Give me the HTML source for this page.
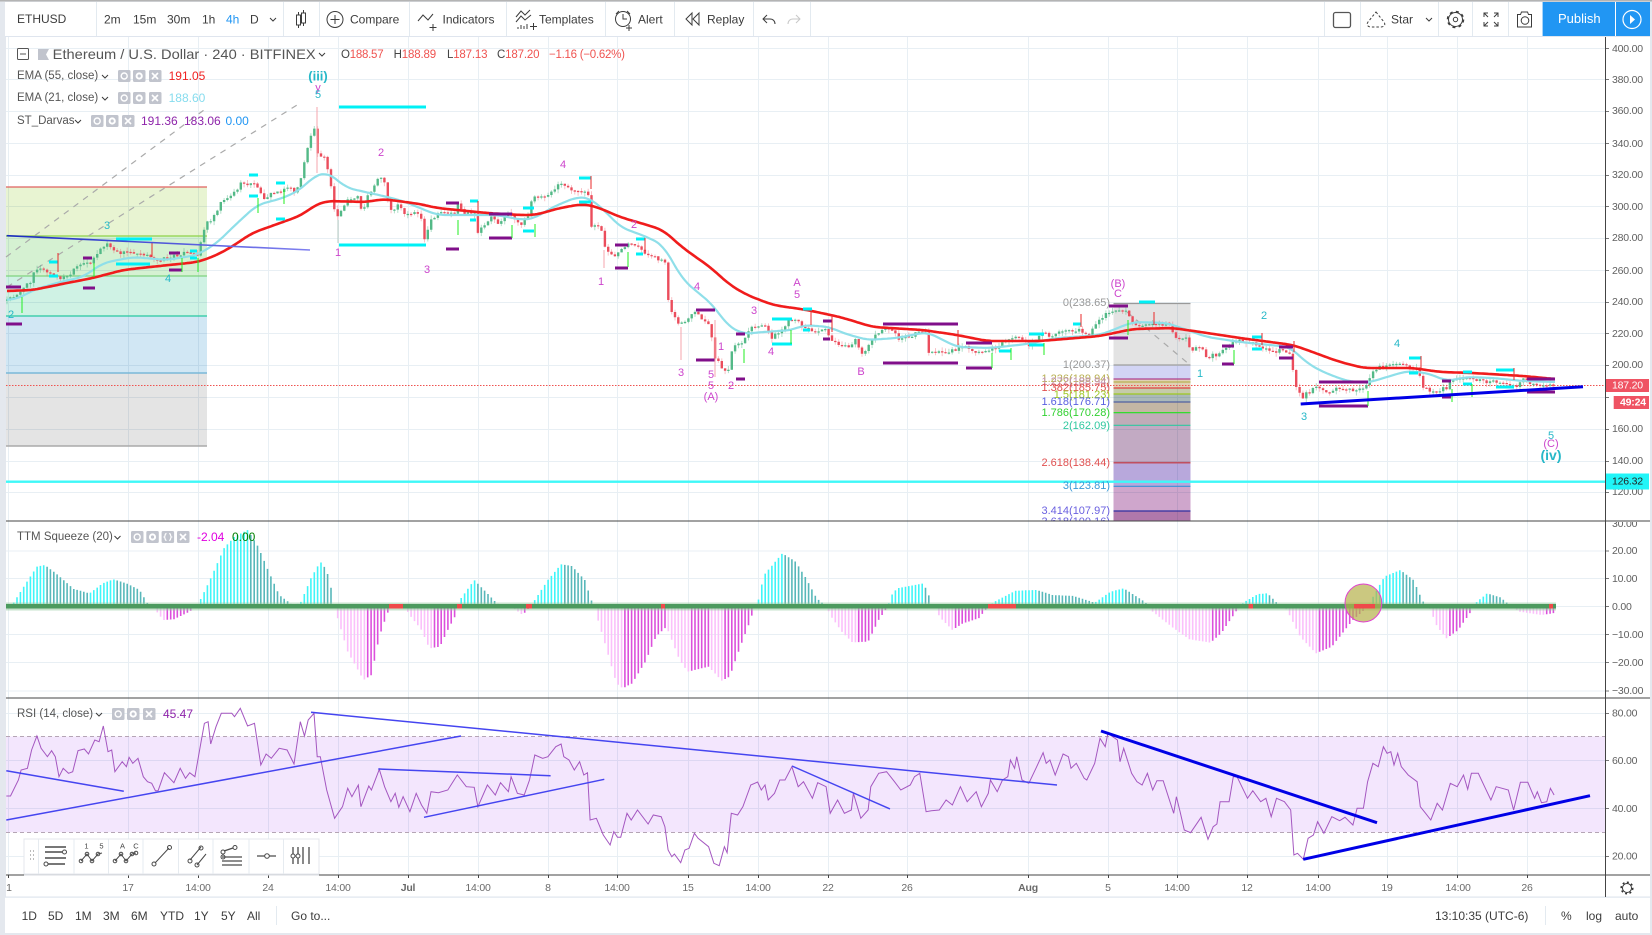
<!DOCTYPE html>
<html lang="en"><head><meta charset="utf-8"><title>ETHUSD chart</title>
<style>
html,body{margin:0;padding:0;width:1652px;height:935px;overflow:hidden;background:#e4e8ee}
svg{position:absolute;left:0;top:0;display:block}
text{font-family:"Liberation Sans",sans-serif;dominant-baseline:central}
.t{font-size:12px;fill:#3c3c3c}
.lg{font-size:11.5px;fill:#555}
.ax{font-size:10.5px;fill:#606060;letter-spacing:-.2px}
.tm{font-size:10.5px;fill:#6a6a6a;text-anchor:middle;letter-spacing:-.2px}
.fb{font-size:11px;text-anchor:end}
.w{font-size:11px;text-anchor:middle}
.p{fill:#cc44cc}.c{fill:#26b8c8}
.i{fill:none;stroke:#3c3c3c;stroke-width:1}
.d{stroke-width:3;fill:none}
</style></head><body>
<svg width="1652" height="935" viewBox="0 0 1652 935" xmlns="http://www.w3.org/2000/svg">
<defs>
<clipPath id="cm"><rect x="6" y="37" width="1599" height="484"/></clipPath>
<clipPath id="cs"><rect x="6" y="522" width="1644" height="176"/></clipPath>
<g id="b3"><rect x="0" y="0" width="12.5" height="12" rx="1.5" fill="#c1c4cd"/><circle cx="6.2" cy="6" r="3" fill="none" stroke="#fff" stroke-width="1.4"/><rect x="15" y="0" width="12.5" height="12" rx="1.5" fill="#c1c4cd"/><circle cx="21.2" cy="6" r="2.6" fill="none" stroke="#fff" stroke-width="2"/><rect x="31" y="0" width="12.5" height="12" rx="1.5" fill="#c1c4cd"/><path d="M34 3l6 6M40 3l-6 6" stroke="#fff" stroke-width="1.6"/></g>
<linearGradient id="gb" x1="0" x2="1" y1="0" y2="0"><stop offset="0" stop-color="#1a2ac0"/><stop offset="1" stop-color="#8080f0"/></linearGradient>
</defs>

<!-- shell -->
<rect x="0" y="0" width="1652" height="1.5" fill="#b4b4b4"/>
<rect x="5" y="2" width="1645" height="34" fill="#fff"/>
<rect x="5" y="36" width="1645" height="1.2" fill="#dfe5ee"/>
<rect x="6" y="37" width="1644" height="860" fill="#fff"/>
<rect x="5" y="897" width="1645" height="36" fill="#fff"/>
<rect x="5" y="896.5" width="1645" height="1.2" fill="#dfe5ee"/>

<!-- toolbar -->
<g stroke="#e3eaf0" stroke-width="1"><path d="M96.5 2V36M283.5 2V36M319.5 2V36M409.5 2V36M506.5 2V36M605.5 2V36M674.5 2V36M753.5 2V36M810.5 2V36M1324.5 2V36M1360.5 2V36M1438.5 2V36M1472.5 2V36M1508.5 2V36"/></g>
<text class="t" x="17" y="19">ETHUSD</text>
<text class="t" x="104" y="19.5">2m</text><text class="t" x="133" y="19.5">15m</text><text class="t" x="167" y="19.5">30m</text><text class="t" x="202" y="19.5">1h</text><text class="t" x="226" y="19.5" style="fill:#2196f3">4h</text><text class="t" x="250" y="19.5">D</text>
<path class="i" d="M270 18l3 3 3-3"/>
<path class="i" d="M298.5 12v3M298.5 25v3M303.5 10v3M303.5 23v3"/><rect class="i" x="296.5" y="15" width="4" height="10"/><rect class="i" x="301.5" y="13" width="4" height="10"/>
<circle class="i" cx="335" cy="19.5" r="8"/><path class="i" d="M335 15v9M330.5 19.5h9"/>
<text class="t" x="350" y="19.5">Compare</text>
<path class="i" d="M418 21l5-6 5 5 5-6M433 24v7M429.5 27.5h7"/>
<text class="t" x="442.5" y="19.5">Indicators</text>
<path class="i" d="M516 17l5-6 4 4 5-5M516 22l5-6 4 4 6-5M518 29v-2M521 29v-4M524 29v-3M527 29v-5M530 26.5h7M533.5 23v7"/>
<text class="t" x="539" y="19.5">Templates</text>
<circle class="i" cx="623" cy="19" r="7.5"/><path class="i" d="M623 14v5h4M616 14l3-3M630 14l-3-3M626 28h6M629 25v6"/>
<text class="t" x="638" y="19.5">Alert</text>
<path class="i" d="M692 13l-6 6 6 6zM699 13l-6 6 6 6z"/>
<text class="t" x="707" y="19.5">Replay</text>
<path class="i" d="M767 15l-4 4 4 4M763 19h7c3 0 5 2 5 5"/>
<path class="i" style="stroke:#c8c8c8" d="M796 15l4 4-4 4M800 19h-7c-3 0-5 2-5 5"/>
<rect x="1333.5" y="12.5" width="17" height="15" rx="2" fill="none" stroke="#555" stroke-width="1.3"/>
<path class="i" d="M1376 12l8 10c2 3 0 5-3 5h-10c-3 0-5-2-3-5z" stroke-dasharray="2.5 2"/>
<text class="t" x="1391" y="19.5">Star</text>
<path class="i" d="M1426 18l3 3 3-3"/>
<circle class="i" cx="1455.5" cy="19.5" r="2.2"/><circle class="i" cx="1455.5" cy="19.5" r="7"/><circle cx="1455.5" cy="19.5" r="8" fill="none" stroke="#3c3c3c" stroke-width="1.5" stroke-dasharray="3 3.3"/>
<path class="i" d="M1484 17v-4h4M1484 13l4 4M1498 17v-4h-4M1498 13l-4 4M1484 22v4h4M1484 26l4-4M1498 22v4h-4M1498 26l-4-4"/>
<path class="i" d="M1517.500 14.500h3l1-2.500h6l1 2.500h3v12.500h-14z"/><circle class="i" cx="1525" cy="20.500" r="3.800"/>
<rect x="1542.600" y="2" width="72.400" height="34" fill="#2196f3"/>
<rect x="1616" y="2" width="34" height="34" fill="#2196f3"/>
<text x="1558" y="18.500" style="font-size:13px;fill:#fff">Publish</text>
<circle cx="1632" cy="19.500" r="9" fill="none" stroke="#fff" stroke-width="1.200"/><path d="M1630 15l5 4.500-5 4.500z" fill="#fff"/>

<!-- fib left + mid -->
<g style="mix-blend-mode:multiply">
<rect x="6" y="187" width="201" height="49" fill="#e8f4d2"/>
<rect x="6" y="236" width="201" height="40" fill="#d5f1d2"/>
<rect x="6" y="276" width="201" height="40" fill="#cff2e4"/>
<rect x="6" y="316" width="201" height="57" fill="#d1e7f4"/>
<rect x="6" y="373" width="201" height="73" fill="#e4e4e4"/>
<rect x="1113.500" y="303" width="77" height="62" fill="#e3e3e3"/>
<rect x="1113.500" y="365" width="77" height="14" fill="#d2d4f4"/>
<rect x="1113.500" y="379" width="77" height="9" fill="#e0d0b4"/>
<rect x="1113.500" y="388" width="77" height="6" fill="#c6cbaa"/>
<rect x="1113.500" y="394" width="77" height="8" fill="#abb9b9"/>
<rect x="1113.500" y="402" width="77" height="11" fill="#c3b6a4"/>
<rect x="1113.500" y="413" width="77" height="12" fill="#c0acb8"/>
<rect x="1113.500" y="425" width="77" height="38" fill="#c2aac3"/>
<rect x="1113.500" y="463" width="77" height="23" fill="#b8a8dc"/>
<rect x="1113.500" y="486" width="77" height="25" fill="#cfa6cc"/>
<rect x="1113.500" y="511" width="77" height="10" fill="#b078ab"/>
</g>
<rect x="6" y="736.500" width="1599" height="95.800" fill="#f3e6fd"/>

<!-- grid -->
<g stroke="#e8eff4" stroke-width="1" style="mix-blend-mode:multiply">
<path d="M8.500 37V875M128.500 37V875M198.500 37V875M268.500 37V875M338.500 37V875M408.500 37V875M478.500 37V875M548.500 37V875M617.500 37V875M688.500 37V875M758.500 37V875M828.500 37V875M907.500 37V875M1028.500 37V875M1108.500 37V875M1177.500 37V875M1247.500 37V875M1318.500 37V875M1387.500 37V875M1457.500 37V875M1527.500 37V875"/>
<path d="M6 48.500H1605M6 79.500H1605M6 111.500H1605M6 143.500H1605M6 175.500H1605M6 206.500H1605M6 238.500H1605M6 270.500H1605M6 302.500H1605M6 333.500H1605M6 365.500H1605M6 397.500H1605M6 429.500H1605M6 461.500H1605M6 492.500H1605"/>
<path d="M6 551H1605M6 578.500H1605M6 606.500H1605M6 634.500H1605M6 662.500H1605M6 691H1605"/>
<path d="M6 713.500H1605M6 760.500H1605M6 808.500H1605M6 856.500H1605"/>
</g>

<!-- fib lines -->
<g stroke-width="1.200" fill="none">
<path stroke="#e06060" d="M6 187H207"/><path stroke="#8fd24a" d="M6 236H207"/><path stroke="#7fd27f" d="M6 276H207"/><path stroke="#26c9a0" d="M6 316H207"/><path stroke="#7ab8d8" stroke-width="1.600" d="M6 373H207"/><path stroke="#aaa" stroke-width="1.600" d="M6 446H207"/>
<path stroke="#999" d="M1113.500 303.500H1190.500"/><path stroke="#aaa" stroke-width="1.600" d="M1113.500 365H1190.500"/><path stroke="#b04090" d="M1113.500 379H1190.500"/><path stroke="#b8b050" d="M1113.500 382H1190.500"/><path stroke="#e04040" d="M1113.500 388H1190.500"/><path stroke="#9cc820" d="M1113.500 394H1190.500"/><path stroke="#5060a0" d="M1113.500 402H1190.500"/><path stroke="#20e020" d="M1113.500 412.700H1190.500"/><path stroke="#30c8a0" d="M1113.500 425.300H1190.500"/><path stroke="#c05060" stroke-width="1.600" d="M1113.500 462.700H1190.500"/><path stroke="#3a90d8" d="M1113.500 486.300H1190.500"/><path stroke="#3030a0" d="M1113.500 511H1190.500"/>
<path stroke="#aaa" stroke-dasharray="6 6" d="M6 257L208 107M7 287L297 105M1127 312L1190 365"/>
</g>
<rect x="6" y="480.500" width="1599" height="2.400" fill="#40f8f8"/>
<path stroke="#ef5350" stroke-width="1" stroke-dasharray="1.500 1.500" d="M6 385.500H1605" fill="none"/>
<g clip-path="url(#cm)">
<text class="fb" x="1110" y="303" fill="#999">0(238.65)</text>
<text class="fb" x="1110" y="365" fill="#999">1(200.37)</text>
<text class="fb" x="1110" y="379" fill="#b8b050">1.236(189.94)</text>
<text class="fb" x="1110" y="382" fill="#c090b0">1.272(188.94)</text>
<text class="fb" x="1110" y="388" fill="#e05050">1.382(185.75)</text>
<text class="fb" x="1110" y="395" fill="#9cc820">1.5(181.23)</text>
<text class="fb" x="1110" y="402" fill="#5a60e0">1.618(176.71)</text>
<text class="fb" x="1110" y="413" fill="#30d030">1.786(170.28)</text>
<text class="fb" x="1110" y="426" fill="#30c8a0">2(162.09)</text>
<text class="fb" x="1110" y="463" fill="#e05050">2.618(138.44)</text>
<text class="fb" x="1110" y="486" fill="#3a9ad8">3(123.81)</text>
<text class="fb" x="1110" y="511" fill="#6a60e0">3.414(107.97)</text>
<text class="fb" x="1110" y="522" fill="#6a60e0">3.618(100.16)</text>
</g>

<!-- candles (filled by script) -->
<g clip-path="url(#cm)">
<path id="gw" stroke="#53b987" stroke-opacity=".45" fill="none" stroke-width="1"/>
<path id="rw" stroke="#eb4d5c" stroke-opacity=".35" fill="none" stroke-width="1"/>
<path id="gb2" fill="#53b987"/>
<path id="rb" fill="#eb4d5c"/>
<path id="e21" fill="none" stroke="#8fdfe9" stroke-width="2.200" stroke-linejoin="round"/>
<path id="e55" fill="none" stroke="#f01c1c" stroke-width="2.600" stroke-linejoin="round"/>
<!-- darvas -->
<path class="d" stroke="#00f0f5" d="M116 239H152M116 264H150M49 262H58M49 276H58M190 251H197M190 258H197M249 175H258M249 196H258M276 183H285M276 219H285M339 107H426M339 245H426M470 201H478M470 220H476M523 208H534M523 231H534M579 178H591M579 202H591M636 239H645M636 254H643M772 319H792M772 344H792M803 309H812M803 330H810M999 351H1011M1029 334H1044M1029 345H1044M1073 324H1081M1139 302H1155M1252 337H1262M1252 349H1262M1409 358H1421M1409 373H1418M1463 372H1472M1463 384H1472M1496 370H1514M1496 387H1514"/>
<path class="d" stroke="#800f8a" d="M6 287H21M6 324H22M83 288H95M83 258H92M169 253H180M169 270H182M446 203H459M446 249H459M489 214H512M489 238H512M615 245H628M615 268H628M696 310H715M696 360H715M736 334H745M736 379H745M823 321H832M823 339H830M883 324H958M883 363H958M966 343H992M966 368H992M1109 306H1128M1109 338H1128M1222 346H1234M1222 364H1234M1279 347H1293M1279 358H1293M1319 382H1368M1319 406H1368M1442 381H1451M1442 397H1451M1527 379H1555M1527 392H1555"/>
<path fill="none" stroke="#22ee22" stroke-width="1" d="M22 297V313M94 263V277M182 258V272M198 258V272M258 198V213M284 190V204M458 220V235M512 225V238M535 224V237M628 252V267M744 349V363M791 330V344M992 353V368M1011 348V360M1044 343V355M1128 320V335M1234 350V364M1368 391V406M1452 389V402M1472 384V397"/>
<path fill="none" stroke="#ea2a2a" stroke-width="1" d="M58 253V272M152 242V257M478 201V213M591 176V189M645 238V251M811 311V325M832 315V332M958 330V345M1081 314V327M1154 312V325M1262 333V345M1294 341V352M1421 356V370M1514 368V380"/>
<path fill="none" stroke="#f4a6ae" stroke-width="1" d="M317 107V173M681 327V360M715 320V377M604 250V268"/>
<path fill="none" stroke="#b5c8c0" stroke-width="1" d="M338 220V243"/>
<!-- trend lines -->
<path stroke="url(#gb)" stroke-width="1.600" fill="none" d="M6.700 235.700L310 250"/>
<path stroke="#0000e6" stroke-width="3" fill="none" d="M1300.700 404L1583 386.700"/>
</g>

<!-- wave labels -->
<text class="w c" x="318" y="76" style="font-size:13px;font-weight:bold">(iii)</text>
<text class="w p" x="318" y="88">y</text><text class="w c" x="318" y="95">5</text>
<text class="w p" x="381" y="153">2</text><text class="w c" x="107" y="226">3</text><text class="w c" x="168" y="279">4</text><text class="w c" x="11" y="315">2</text>
<text class="w p" x="338" y="253">1</text><text class="w p" x="427" y="270">3</text><text class="w p" x="563" y="165">4</text><text class="w p" x="601" y="282">1</text><text class="w p" x="634" y="225">2</text><text class="w p" x="697" y="287">4</text><text class="w p" x="721" y="347">1</text><text class="w p" x="681" y="373">3</text><text class="w p" x="711" y="375">5</text><text class="w p" x="711" y="386">5</text><text class="w p" x="711" y="397">(A)</text><text class="w p" x="731" y="386">2</text><text class="w p" x="754" y="311">3</text><text class="w p" x="771" y="352">4</text><text class="w p" x="797" y="283">A</text><text class="w p" x="797" y="295">5</text><text class="w p" x="861" y="372">B</text><text class="w p" x="1118" y="284">(B)</text><text class="w p" x="1118" y="294">C</text>
<text class="w c" x="1200" y="374">1</text><text class="w c" x="1264" y="316">2</text><text class="w c" x="1304" y="417">3</text><text class="w c" x="1397" y="344">4</text><text class="w c" x="1551" y="436">5</text><text class="w p" x="1551" y="444">(C)</text><text class="w c" x="1551" y="455" style="font-size:14px;font-weight:bold">(iv)</text>

<!-- legends -->
<rect x="17.500" y="48.500" width="11" height="11" rx="1" fill="none" stroke="#555"/><path d="M20 54h6" stroke="#555"/>
<path d="M38 49h11l-3 5.500 3 5.500h-11z" fill="#c1c4cd"/>
<text x="52.700" y="54" textLength="263" lengthAdjust="spacingAndGlyphs" style="font-size:14px;fill:#555">Ethereum / U.S. Dollar · 240 · BITFINEX</text>
<path class="i" d="M319 53l3 3 3-3"/>
<g style="font-size:11.500px" fill="#ef5350">
<text x="341" y="55" textLength="42.600"><tspan fill="#444">O</tspan>188.57</text>
<text x="393.600" y="55" textLength="42.600"><tspan fill="#444">H</tspan>188.89</text>
<text x="447" y="55" textLength="40.500"><tspan fill="#444">L</tspan>187.13</text>
<text x="497" y="55" textLength="42.500"><tspan fill="#444">C</tspan>187.20</text>
<text x="549" y="55" textLength="76">−1.16 (−0.62%)</text>
</g>
<text class="lg" x="17" y="76">EMA (55, close)</text><path class="i" d="M102 75l3 3 3-3"/><use href="#b3" x="118" y="70"/><text x="168.600" y="76" style="font-size:12px" fill="#f02020">191.05</text>
<text class="lg" x="17" y="98">EMA (21, close)</text><path class="i" d="M102 97l3 3 3-3"/><use href="#b3" x="118" y="92"/><text x="168.600" y="98" style="font-size:12px" fill="#86dcee">188.60</text>
<text class="lg" x="17" y="121">ST_Darvas</text><path class="i" d="M75 120l3 3 3-3"/><use href="#b3" x="91" y="115"/><text x="141" y="121" style="font-size:12px" fill="#8e24aa">191.36</text><text x="184" y="121" style="font-size:12px" fill="#8e24aa">183.06</text><text x="225.500" y="121" style="font-size:12px" fill="#2196f3">0.00</text>

<!-- squeeze -->
<g clip-path="url(#cs)">
<path id="hc" stroke="#40f5f8" stroke-width="1.600" fill="none"/>
<path id="ht" stroke="#58b8ba" stroke-width="1.600" fill="none"/>
<path id="hp" stroke="#fbc0fb" stroke-width="1.600" fill="none"/>
<path id="hm" stroke="#dc50dc" stroke-width="1.600" fill="none"/>
<rect x="6" y="602.500" width="1550" height="8" fill="#8fc79a" opacity=".5"/>
<rect x="6" y="604" width="1550" height="4.500" fill="#4c9a5e"/>
<ellipse cx="1363.400" cy="603" rx="18.400" ry="19" fill="#b5b04a" fill-opacity=".7" stroke="#e040d0" stroke-width="1"/>
<path fill="#ef4a4a" d="M389 604h14v4.500h-14zM457 604h5v4.500h-5zM526 604h6v4.500h-6zM661 604h4v4.500h-4zM988 604h28v4.500h-28zM1248.500 604h4.500v4.500h-4.500zM1354 604h21v4.500h-21zM1549 604h4v4.500h-4z"/>
</g>
<text class="lg" x="17" y="537">TTM Squeeze (20)</text><path class="i" d="M114.500 536l3 3 3-3"/>
<rect x="131" y="531" width="12.500" height="12" rx="1.500" fill="#c1c4cd"/><circle cx="137.200" cy="537" r="3" fill="none" stroke="#fff" stroke-width="1.400"/>
<rect x="146.300" y="531" width="12.500" height="12" rx="1.500" fill="#c1c4cd"/><circle cx="152.500" cy="537" r="2.600" fill="none" stroke="#fff" stroke-width="2"/>
<rect x="161.600" y="531" width="12.500" height="12" rx="1.500" fill="#c1c4cd"/><path d="M166.500 533.500c-2 0-1 3-2.200 3.500 1.200.5.200 3.500 2.200 3.500M169.200 533.500c2 0 1 3 2.200 3.500-1.200.5-.2 3.500-2.200 3.500" fill="none" stroke="#fff" stroke-width="1.200"/>
<rect x="177" y="531" width="12.500" height="12" rx="1.500" fill="#c1c4cd"/><path d="M180 534l6 6M186 534l-6 6" stroke="#fff" stroke-width="1.600"/>
<text x="197" y="537" style="font-size:12px" fill="#e000e0">-2.04</text><text x="232" y="537" style="font-size:12px" fill="#008000">0.00</text>

<!-- rsi -->
<path d="M6 736.500H1605M6 832.500H1605" stroke="#b5a5b5" stroke-width="1" stroke-dasharray="4 3" fill="none"/>
<path id="rsi" fill="none" stroke="#a457c0" stroke-width="1"/>
<g fill="none" stroke="#4545f0" stroke-width="1.500">
<path d="M6.300 770.700L123.800 791.300"/><path d="M6.300 820L461 736"/><path d="M311 712.300L1057 785"/><path d="M378.300 769L550.600 775.700"/><path d="M424 817.300L604.300 779.300"/><path d="M792 766L890 809"/>
</g>
<g fill="none" stroke="#0000e6" stroke-width="3">
<path d="M1101 731L1377 822.700"/><path d="M1303.300 859.300L1590 795.700"/>
</g>
<text class="lg" x="17" y="714">RSI (14, close)</text><path class="i" d="M96 713l3 3 3-3"/><use href="#b3" x="112" y="708"/><text x="163" y="714" style="font-size:12px" fill="#8e24aa">45.47</text>

<!-- axis labels -->
<g class="axg">
<text class="ax" x="1612" y="49">400.00</text><text class="ax" x="1612" y="80">380.00</text><text class="ax" x="1612" y="111">360.00</text><text class="ax" x="1612" y="144">340.00</text><text class="ax" x="1612" y="175">320.00</text><text class="ax" x="1612" y="207">300.00</text><text class="ax" x="1612" y="238">280.00</text><text class="ax" x="1612" y="271">260.00</text><text class="ax" x="1612" y="302">240.00</text><text class="ax" x="1612" y="334">220.00</text><text class="ax" x="1612" y="365">200.00</text><text class="ax" x="1612" y="429">160.00</text><text class="ax" x="1612" y="461">140.00</text><text class="ax" x="1612" y="492">120.00</text>
<g clip-path="url(#cs)"><text class="ax" x="1612" y="524">30.00</text></g>
<text class="ax" x="1612" y="551">20.00</text><text class="ax" x="1612" y="579">10.00</text><text class="ax" x="1612" y="607">0.00</text><text class="ax" x="1612" y="635">−10.00</text><text class="ax" x="1612" y="663">−20.00</text><text class="ax" x="1612" y="691">−30.00</text>
<text class="ax" x="1612" y="713.500">80.00</text><text class="ax" x="1612" y="761">60.00</text><text class="ax" x="1612" y="809">40.00</text><text class="ax" x="1612" y="856.500">20.00</text>
</g>
<path stroke="#777" d="M1605 48.500h4M1605 79.500h4M1605 111.500h4M1605 143.500h4M1605 175.500h4M1605 206.500h4M1605 238.500h4M1605 270.500h4M1605 302.500h4M1605 333.500h4M1605 365.500h4M1605 397.500h4M1605 429.500h4M1605 461.500h4M1605 492.500h4M1605 551h4M1605 578.500h4M1605 606.500h4M1605 634.500h4M1605 662.500h4M1605 691h4M1605 713.500h4M1605 760.500h4M1605 808.500h4M1605 856.500h4" fill="none"/>
<rect x="1605" y="379" width="44" height="13" fill="#ef5363"/><text x="1612" y="385.500" style="font-size:10.500px;fill:#fff;letter-spacing:-.2px">187.20</text>
<rect x="1613.700" y="396" width="35.300" height="13" fill="#ef5363"/><text x="1620" y="402.500" style="font-size:10.500px;fill:#fff;font-weight:bold;letter-spacing:-.2px">49:24</text>
<rect x="1605" y="473.500" width="44" height="16" fill="#20f5f8"/><text x="1612" y="481.500" style="font-size:10.500px;fill:#222;letter-spacing:-.2px">126.32</text>

<!-- separators -->
<path d="M6 521H1650M6 698H1650M6 875H1650" stroke="#444" stroke-width="1" fill="none"/>
<path d="M1605.500 37V897" stroke="#444" stroke-width="1" fill="none"/>

<!-- time axis -->
<text class="tm" x="9" y="888">1</text><text class="tm" x="128" y="888">17</text><text class="tm" x="198" y="888">14:00</text><text class="tm" x="268" y="888">24</text><text class="tm" x="338" y="888">14:00</text><text class="tm" x="408" y="888" style="font-weight:bold">Jul</text><text class="tm" x="478" y="888">14:00</text><text class="tm" x="548" y="888">8</text><text class="tm" x="617" y="888">14:00</text><text class="tm" x="688" y="888">15</text><text class="tm" x="758" y="888">14:00</text><text class="tm" x="828" y="888">22</text><text class="tm" x="907" y="888">26</text><text class="tm" x="1028" y="888" style="font-weight:bold">Aug</text><text class="tm" x="1108" y="888">5</text><text class="tm" x="1177" y="888">14:00</text><text class="tm" x="1247" y="888">12</text><text class="tm" x="1318" y="888">14:00</text><text class="tm" x="1387" y="888">19</text><text class="tm" x="1458" y="888">14:00</text><text class="tm" x="1527" y="888">26</text>
<path stroke="#444" d="M8.500 875v3M128.500 875v3M198.500 875v3M268.500 875v3M338.500 875v3M408.500 875v3M478.500 875v3M548.500 875v3M617.500 875v3M688.500 875v3M758.500 875v3M828.500 875v3M907.500 875v3M1028.500 875v3M1108.500 875v3M1177.500 875v3M1247.500 875v3M1318.500 875v3M1387.500 875v3M1457.500 875v3M1527.500 875v3" fill="none"/>
<circle cx="1627" cy="888" r="4.500" fill="none" stroke="#333"/><circle cx="1627" cy="888" r="5.800" fill="none" stroke="#333" stroke-width="1.500" stroke-dasharray="2 2.500"/>

<!-- drawing toolbar -->
<rect x="24" y="839" width="295" height="35" fill="#fff" stroke="#e4e7ec"/>
<rect x="24" y="874" width="295" height="1.500" fill="#d8dbe0"/>
<path stroke="#e6ebf0" d="M38.500 839v35M74 839v35M108.500 839v35M143 839v35M178.500 839v35M213 839v35M249 839v35M283.500 839v35" fill="none"/>
<path d="M30 851h1M33 851h1M30 855h1M33 855h1M30 859h1M33 859h1" stroke="#bbb" stroke-width="2" fill="none"/>
<g fill="none" stroke="#4a4a4a" stroke-width="1">
<path stroke-width="1.500" d="M45 847h21M45 852h17M45 858h21M48 864h17"/><circle cx="64.500" cy="852" r="2"/><circle cx="46" cy="864" r="2"/>
<path d="M81 861l6-7 5 7 6-7 4-1"/><circle cx="81" cy="861" r="1.800"/><circle cx="87" cy="854" r="1.800"/><circle cx="92" cy="861" r="1.800"/><circle cx="98" cy="854" r="1.800"/>
<path d="M115 861l6-7 5 7 6-7 4-1"/><circle cx="115" cy="861" r="1.800"/><circle cx="121" cy="854" r="1.800"/><circle cx="126" cy="861" r="1.800"/><circle cx="132" cy="854" r="1.800"/><circle cx="136" cy="853" r="1.800"/>
<path d="M155 863l14-15"/><circle cx="154" cy="864" r="2"/><circle cx="169.500" cy="847.500" r="2"/>
<path d="M190 860l11-13M197 865l9-11"/><circle cx="190" cy="861" r="2"/><circle cx="201" cy="848" r="2"/><circle cx="197" cy="865" r="2"/>
<path d="M224 851l9-3M222 857h20M222 861h20M222 865h20" stroke-width="1.300"/><circle cx="223" cy="852" r="2"/><circle cx="235" cy="847.500" r="2"/><circle cx="223" cy="857" r="2"/>
<path stroke-width="1.300" d="M257 856h19"/><circle cx="267" cy="856" r="2.300" fill="#fff"/>
<path stroke-width="1.300" d="M293 847v17M298 847v17M303 847v17M309 847v17"/><circle cx="293" cy="856" r="2" fill="#fff"/><circle cx="298" cy="856" r="2" fill="#fff"/>
</g>
<text x="86.500" y="846" style="font-size:7.500px;fill:#444;text-anchor:middle">1</text><text x="101.500" y="846" style="font-size:7.500px;fill:#444;text-anchor:middle">5</text>
<text x="122.500" y="846" style="font-size:7.500px;fill:#444;text-anchor:middle">A</text><text x="136" y="846" style="font-size:7.500px;fill:#444;text-anchor:middle">C</text>

<!-- bottom bar -->
<text class="t" x="21.600" y="916">1D</text><text class="t" x="48" y="916">5D</text><text class="t" x="75" y="916">1M</text><text class="t" x="103" y="916">3M</text><text class="t" x="131" y="916">6M</text><text class="t" x="160" y="916">YTD</text><text class="t" x="194" y="916">1Y</text><text class="t" x="221" y="916">5Y</text><text class="t" x="247" y="916">All</text>
<path stroke="#e3eaf0" d="M276.500 906v19M1545.500 906v19" fill="none"/>
<text class="t" x="291" y="916">Go to...</text>
<text class="t" x="1435" y="916">13:10:35 (UTC-6)</text>
<text class="t" x="1561" y="916">%</text><text class="t" x="1586" y="916">log</text><text class="t" x="1615" y="916">auto</text>
</svg>
<script>
(function(){
var C=[[7,300],[15,295],[22,290],[30,282],[35,268],[43,270],[58,278],[68,277],[77,267],[90,262],[100,250],[108,243],[115,253],[133,252],[143,253],[153,260],[170,258],[182,253],[197,255],[202,238],[205,225],[213,217],[222,200],[232,195],[242,183],[257,185],[262,198],[277,192],[287,187],[295,192],[302,177],[305,158],[310,137],[315,128],[318,155],[325,155],[328,173],[333,193],[335,220],[340,213],[347,200],[358,197],[362,215],[367,197],[377,180],[383,177],[387,197],[392,213],[398,203],[403,213],[410,213],[420,213],[425,240],[430,222],[440,213],[455,213],[458,203],[463,213],[475,215],[478,233],[487,223],[490,215],[500,225],[502,217],[510,213],[520,225],[528,217],[533,195],[543,197],[557,187],[563,183],[573,193],[583,190],[590,197],[591,227],[600,225],[605,248],[615,257],[628,245],[640,248],[650,257],[663,260],[667,263],[668,297],[672,312],[677,323],[683,323],[695,313],[710,327],[715,358],[722,368],[730,372],[732,347],[743,343],[752,327],[767,327],[770,338],[780,332],[790,320],[797,322],[810,330],[818,333],[825,327],[832,340],[848,348],[857,338],[860,358],[870,342],[880,330],[892,330],[900,340],[920,332],[927,332],[928,353],[943,352],[955,350],[960,345],[980,353],[1000,345],[1010,338],[1020,337],[1028,345],[1043,333],[1053,338],[1062,330],[1080,330],[1088,335],[1100,320],[1107,312],[1127,312],[1133,322],[1140,325],[1153,322],[1170,325],[1175,338],[1187,338],[1190,350],[1202,347],[1207,358],[1220,353],[1233,342],[1240,340],[1262,347],[1272,353],[1283,350],[1292,355],[1294,385],[1303,397],[1317,385],[1327,392],[1340,388],[1357,392],[1367,383],[1373,370],[1385,365],[1400,365],[1418,370],[1422,385],[1432,392],[1448,387],[1453,378],[1470,378],[1487,382],[1507,382],[1515,388],[1523,380],[1540,387],[1555,384]];
var E55=[[7,291],[33,290],[67,283],[93,278],[123,270],[150,267],[198,262],[217,255],[233,246],[252,233],[283,222],[302,215],[315,205],[327,201],[367,202],[383,199],[420,204],[437,208],[457,210],[487,213],[520,215],[535,215],[560,208],[583,204],[597,207],[620,217],[647,225],[663,230],[683,248],[710,267],[730,285],[747,295],[773,305],[807,310],[840,317],[873,327],[923,330],[957,335],[987,341],[1040,341],[1100,336],[1133,329],[1173,328],[1207,333],[1240,338],[1293,345],[1307,350],[1337,361],[1363,368],[1413,368],[1440,372],[1473,373],[1523,376],[1555,379]];
var E21=[[7,300],[20,298],[33,290],[60,282],[83,277],[103,263],[133,257],[167,260],[197,255],[217,243],[233,227],[257,205],[283,198],[300,190],[313,177],[327,172],[347,188],[370,193],[400,200],[420,208],[437,215],[463,215],[497,215],[523,220],[535,218],[553,207],[577,197],[590,198],[607,213],[620,227],[647,237],[663,245],[683,280],[713,305],[727,325],[743,334],[763,332],[793,330],[803,325],[830,327],[840,332],[867,340],[897,338],[927,332],[957,347],[990,348],[1027,344],[1057,338],[1100,335],[1133,322],[1167,323],[1207,337],[1240,342],[1290,347],[1307,363],[1323,372],[1347,381],[1367,383],[1387,377],[1407,371],[1427,373],[1447,381],[1467,377],[1493,378],[1523,381],[1555,382]];
var HL=[[12,258],[25,250],[45,200],[70,140],[85,135],[110,165],[140,207],[170,220],[195,190],[215,178],[240,190],[265,210],[280,250],[290,258],[295,270],[310,300],[330,298],[360,275],[372,258],[380,240],[400,175],[425,85],[445,50],[470,30],[490,80],[510,155],[530,225],[555,255],[570,250],[590,175],[608,125],[620,150],[630,215],[635,258],[640,290],[660,395],[690,480],[705,465],[720,350],[735,280],[745,258],[770,258],[775,280],[800,330],[815,385],[835,380],[850,330],[865,285],[870,258],[875,235],[900,180],[920,212],[940,245],[950,258],[975,265],[992,285],[1005,262],[1015,240],[1040,180],[1065,133],[1085,138],[1110,180],[1122,240],[1130,258],[1135,300],[1150,380],[1170,490],[1182,505],[1200,490],[1225,425],[1245,350],[1265,320],[1290,420],[1305,455],[1345,440],[1370,482],[1385,470],[1405,380],[1425,298],[1432,258],[1438,250],[1450,165],[1485,100],[1510,125],[1530,175],[1550,235],[1568,258]];
var HR=[[10,290],[30,335],[50,367],[80,365],[100,300],[115,265],[118,258],[122,230],[135,205],[185,190],[195,225],[200,255],[205,258],[210,265],[215,290],[240,330],[260,310],[290,295],[305,265],[310,258],[320,245],[360,212],[400,210],[430,225],[470,228],[510,248],[540,215],[565,205],[600,240],[612,255],[616,258],[620,275],[660,325],[690,358],[730,368],[750,340],[780,270],[785,258],[795,245],[820,222],[838,220],[860,255],[866,258],[875,270],[900,350],[930,400],[960,380],[1000,300],[1030,258],[1040,225],[1060,170],[1090,150],[1115,180],[1130,235],[1138,258],[1145,262],[1160,320],[1178,355],[1200,330],[1222,280],[1228,258],[1232,250],[1255,220],[1280,232],[1300,258],[1315,275],[1360,285],[1385,278]];
var RL=[[12,588],[20,588],[35,540],[40,510],[52,505],[60,450],[70,408],[78,445],[90,470],[98,452],[105,470],[112,530],[120,505],[130,520],[138,515],[148,452],[160,447],[168,462],[180,420],[188,425],[196,378],[205,455],[212,450],[218,515],[232,485],[240,500],[245,472],[252,490],[262,475],[272,530],[280,545],[288,550],[295,572],[300,572],[312,518],[330,548],[342,505],[352,535],[360,518],[370,530],[380,440],[388,370],[395,365],[400,432],[410,380],[420,340],[440,340],[445,350],[456,325],[470,378],[483,370],[495,495],[505,462],[515,475],[530,445],[545,450],[558,492],[570,365],[578,408],[585,360],[596,340],[602,470],[608,470],[620,570],[635,655],[650,620],[660,565],[668,590],[680,555],[685,620],[700,558],[705,570],[720,508],[730,560],[742,605],[750,580],[757,622],[765,590],[778,635],[790,580],[800,615],[810,640],[818,575],[832,578],[850,570],[868,525],[885,560],[900,562],[907,620],[925,555],[940,585],[950,548],[965,575],[970,530],[982,580],[995,585],[1005,540],[1015,465],[1030,475],[1040,470],[1055,440],[1065,432],[1070,470],[1080,480],[1090,510],[1100,485],[1108,525],[1115,518],[1120,660],[1132,655],[1145,705],[1158,735],[1165,695],[1172,712],[1178,712],[1190,640],[1198,660],[1210,630],[1230,672],[1240,645],[1255,650],[1262,680],[1268,750],[1275,770],[1280,762],[1292,788],[1300,750],[1308,745],[1318,700],[1325,715],[1345,740],[1355,790],[1365,797],[1375,740],[1380,758],[1388,640],[1400,645],[1410,620],[1425,555],[1438,546],[1445,570],[1452,555],[1458,600],[1470,580],[1480,540],[1490,540],[1503,500],[1515,560],[1525,545],[1542,595],[1552,548],[1568,560]];
var RR=[[8,640],[22,600],[35,640],[48,630],[52,580],[66,655],[80,630],[85,560],[100,520],[115,515],[130,545],[142,570],[160,555],[168,530],[178,520],[190,635],[200,632],[215,630],[228,600],[240,615],[255,560],[268,605],[285,575],[295,620],[308,580],[312,540],[325,575],[335,540],[345,530],[350,480],[358,505],[362,470],[372,540],[385,550],[400,500],[412,458],[418,490],[425,480],[435,525],[450,462],[460,470],[465,505],[475,490],[490,535],[495,540],[510,490],[520,415],[530,440],[535,400],[553,420],[558,485],[565,445],[580,520],[590,545],[600,555],[610,520],[620,570],[628,542],[640,542],[660,640],[665,590],[672,635],[680,690],[692,698],[712,652],[725,718],[735,680],[742,672],[748,605],[765,605],[773,530],[780,530],[800,595],[810,572],[825,605],[835,595],[845,650],[855,595],[870,605],[882,630],[888,765],[895,760],[906,778],[915,715],[925,705],[933,665],[945,700],[960,650],[975,662],[985,652],[1000,675],[1008,625],[1020,625],[1028,545],[1038,490],[1048,500],[1058,440],[1065,460],[1072,455],[1078,495],[1085,460],[1092,500],[1105,525],[1122,545],[1128,620],[1138,640],[1148,660],[1160,610],[1170,630],[1185,550],[1198,560],[1210,525],[1218,568],[1225,520],[1238,520],[1250,560],[1262,600],[1272,560],[1295,570],[1305,630],[1318,547],[1332,547],[1345,595],[1350,575],[1358,608],[1368,605],[1375,565],[1382,585]];
var K=1.898;
function ip(p,x){if(x<=p[0][0])return p[0][1];for(var i=1;i<p.length;i++){if(x<=p[i][0]){var a=p[i-1],b=p[i];return a[1]+(b[1]-a[1])*(x-a[0])/((b[0]-a[0])||1);}}return p[p.length-1][1];}
function rnd(i){var s=Math.sin(i*12.9898+4.1)*43758.5453;return s-Math.floor(s);}
function line(p){return 'M'+p.map(function(q){return q[0].toFixed(1)+' '+q[1].toFixed(1);}).join('L');}
function set(id,d){document.getElementById(id).setAttribute('d',d);}
function smooth(p){var o=[],x0=p[0][0],x1=p[p.length-1][0];for(var x=x0;x<=x1;x+=2){var s=0,n=0;for(var k=-8;k<=8;k+=2){var xk=Math.min(x1,Math.max(x0,x+k));s+=ip(p,xk);n++;}o.push([x,s/n]);}return o;}
var gw='',rw='',gb='',rb='',prev=ip(C,7),step=3.34;
for(var i=0;i*step+7<=1555;i++){
  var x=7+i*step,c=ip(C,x)+(rnd(i)-.5)*4,o=prev,t=Math.min(o,c),b=Math.max(o,c);
  if(b-t<1.2)b=t+1.2;
  var hi=t-rnd(i+500)*4,lo=b+rnd(i+900)*4,up=c<o;
  var w='M'+x.toFixed(1)+' '+hi.toFixed(1)+'V'+lo.toFixed(1);
  var r='M'+(x-1.2).toFixed(1)+' '+t.toFixed(1)+'h2.4V'+b.toFixed(1)+'h-2.4z';
  if(up){gw+=w;gb+=r;}else{rw+=w;rb+=r;}
  prev=c;
}
set('gw',gw);set('rw',rw);set('gb2',gb);set('rb',rb);
set('e21',line(smooth(E21)));set('e55',line(smooth(E55)));
var H=HL.map(function(q){return [q[0]/K,q[1]/3+520];}).concat(HR.map(function(q){return [826+q[0]/K,q[1]/3+520];}));
var hc='',ht='',hp='',hm='',base=606.5,last=base;
for(var j=0;7+j*step<=1556;j++){
  var xx=7+j*step,y=ip(H,xx),xs=xx.toFixed(1),seg='M'+xs+' '+base+'V'+y.toFixed(1);
  if(y<base){if(y<=last)hc+=seg;else ht+=seg;}
  else if(y>base){if(y>=last)hp+=seg;else hm+=seg;}
  last=y;
}
set('hc',hc);set('ht',ht);set('hp',hp);set('hm',hm);
var R=RL.map(function(q){return [q[0]/K,q[1]/3+600];}).concat(RR.map(function(q){return [826+q[0]/K,q[1]/3+600];}));
set('rsi',line(R));
})();
</script>
</body></html>
